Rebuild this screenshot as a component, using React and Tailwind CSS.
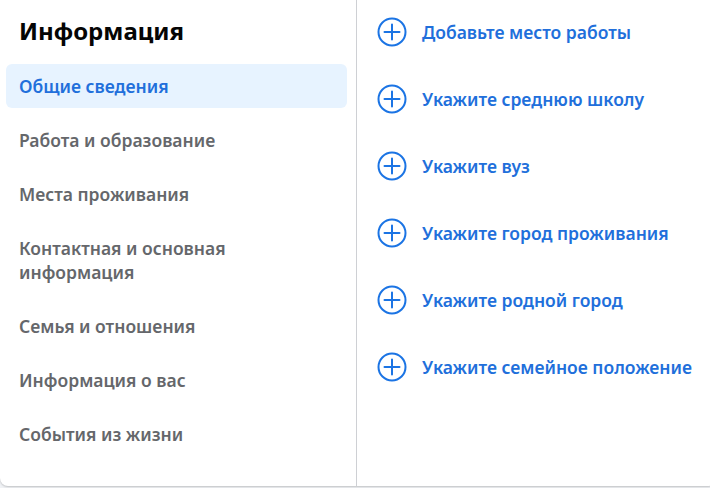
import React from 'react';

const sections = [
    'Общие сведения',
    'Работа и образование',
    'Места проживания',
    'Контактная и основная информация',
    'Семья и отношения',
    'Информация о вас',
    'События из жизни'
];

const actions = [
    'Добавьте место работы',
    'Укажите среднюю школу',
    'Укажите вуз',
    'Укажите город проживания',
    'Укажите родной город',
    'Укажите семейное положение'
];

const PlusCircle = () => (
    <svg width="30" height="30" viewBox="0 0 30 30" fill="none" stroke="#1b74e4" strokeWidth="2" strokeLinecap="round">
        <circle cx="15" cy="15" r="13.5" />
        <path d="M15 7.5v15M7.5 15h15" />
    </svg>
);

const App = () => {
    return (
        <div className="w-[710px] h-[488px] bg-[#f0f2f5] overflow-hidden" style={{ fontFamily: '"Noto Sans", "Open Sans", sans-serif' }}>
            <div className="flex h-[486px] w-[716px] bg-white rounded-b-lg shadow-[0_1px_2px_rgba(0,0,0,0.2)]">
                <div className="w-[357px] shrink-0 border-r border-[#ced0d4] pt-[17px] px-[6px]">
                    <h2 className="px-[13px] text-[24px] leading-[28px] font-bold text-[#050505]">Информация</h2>
                    <ul className="mt-[19px] flex flex-col gap-[10px] pr-[3px]">
                        {sections.map((s, i) => (
                            <li
                                key={s}
                                className={
                                    i === 0
                                        ? 'px-[13px] py-[10px] leading-[24px] text-[17.5px] font-semibold rounded-md bg-[#e7f3ff] text-[#216fdb]'
                                        : 'px-[13px] py-[10px] leading-[24px] text-[17.5px] font-semibold rounded-md text-[#65676b] w-[260px]'
                                }
                            >
                                {s}
                            </li>
                        ))}
                    </ul>
                </div>
                <div className="flex-1 pl-[20px] pt-[12px]">
                    <ul className="flex flex-col gap-[27px]">
                        {actions.map((a) => (
                            <li key={a} className="flex items-center h-[40px] gap-[15px]">
                                <PlusCircle />
                                <span className="text-[17.5px] font-semibold text-[#216fdb]">{a}</span>
                            </li>
                        ))}
                    </ul>
                </div>
            </div>
        </div>
    );
};

export default App;
